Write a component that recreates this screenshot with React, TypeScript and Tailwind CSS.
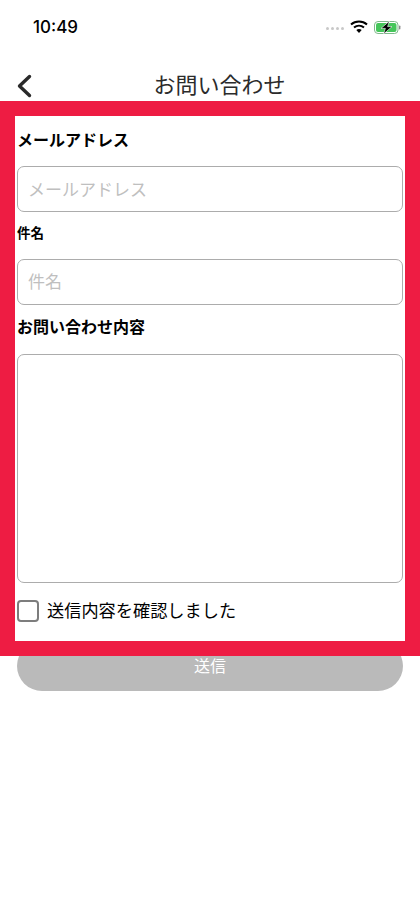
import React from 'react';

const font = { fontFamily: '"Liberation Sans", "Noto Sans CJK JP", sans-serif' };

function StatusBar() {
  return (
    <div className="h-[54px] flex items-center justify-between pl-[33px] pr-[19px]">
      <span className="text-[17px] leading-[54px] font-medium text-black" style={{ fontFamily: 'Inter, sans-serif' }}>10:49</span>
      <div className="flex items-center">
        <div className="flex gap-[2px] mr-[6px] mt-[3px]">
          <span className="w-[3px] h-[3px] rounded-full bg-[#c8c8c8]" />
          <span className="w-[3px] h-[3px] rounded-full bg-[#c8c8c8]" />
          <span className="w-[3px] h-[3px] rounded-full bg-[#c8c8c8]" />
          <span className="w-[3px] h-[3px] rounded-full bg-[#c8c8c8]" />
        </div>
        <svg width="18" height="13" viewBox="0 0 18 13" className="mr-[6px] -mt-[1px]">
          <path d="M1 4.5C5.5 .5 12.5 .5 17 4.5" fill="none" stroke="#000" strokeWidth="2" />
          <path d="M4 7.6C7 5 11 5 14 7.6" fill="none" stroke="#000" strokeWidth="2" />
          <path d="M6.3 10 9 13l2.7-3C10 8.7 8 8.7 6.3 10Z" fill="#000" />
        </svg>
        <svg width="27" height="13" viewBox="0 0 27 13">
          <rect x=".5" y=".5" width="23.5" height="12" rx="3.5" fill="none" stroke="#7fb98a" />
          <rect x="2" y="2" width="20.5" height="9" rx="2" fill="#45c65a" />
          <rect x="25" y="4.5" width="1.4" height="4" rx=".7" fill="#8a8a8a" />
          <path d="M15.5 0 7 7.4h4.4L9.5 13 18 5.6h-4.4Z" fill="#000" stroke="#fff" strokeWidth=".6" />
        </svg>
      </div>
    </div>
  );
}

function Header() {
  return (
    <div className="relative h-[47px] flex items-center justify-center">
      <svg width="16" height="24" viewBox="0 0 16 24" className="absolute left-[16px] top-[20px]">
        <path d="M13.5 2.5 3.5 12l10 9.5" fill="none" stroke="#2a2a2a" strokeWidth="3.4" strokeLinecap="round" strokeLinejoin="round" />
      </svg>
      <h1 className="mt-[17px] ml-[19px] text-[22px] leading-[30px] font-normal text-[#2b2b2b]">お問い合わせ</h1>
    </div>
  );
}

export default function App() {
  return (
    <div className="w-[420px] h-[909px] bg-white overflow-hidden" style={font}>
      <StatusBar />
      <Header />
      <div className="relative z-10 h-[555px] border-[15px] border-[#ee1c43] bg-white">
        <div className="pl-[2px] pr-[2px]">
          <p className="pt-[14px] text-[16px] leading-[22px] font-semibold text-black">メールアドレス</p>
          <input
            placeholder="メールアドレス"
            className="block mt-[14px] w-full h-[46px] pl-[10px] pr-[10px] pt-[4px] rounded-[7px] border border-[#acacac] text-[17px] outline-none placeholder:text-[#bfbfbf]"
          />
          <p className="mt-[12px] text-[13.5px] leading-[20px] font-semibold text-black">件名</p>
          <input
            placeholder="件名"
            className="block mt-[15px] w-full h-[46px] pl-[10px] pr-[10px] pt-[2px] rounded-[7px] border border-[#acacac] text-[17px] outline-none placeholder:text-[#bfbfbf]"
          />
          <p className="mt-[12px] text-[16px] leading-[22px] font-semibold text-black">お問い合わせ内容</p>
          <textarea className="block mt-[15px] w-full h-[229px] rounded-[7px] border border-[#acacac] outline-none resize-none" />
          <div className="mt-[16px] flex items-center">
            <span className="w-[22px] h-[22px] rounded-[4px] border-2 border-[#7d7d7d] bg-white" />
            <span className="ml-[8px] text-[17.2px] leading-[24px] font-normal text-black">送信内容を確認しました</span>
          </div>
        </div>
      </div>
      <button className="block mx-auto -mt-[15px] w-[386px] h-[50px] pt-[2px] rounded-[25px] bg-[#bababa] text-white text-[16px]">送信</button>
    </div>
  );
}
